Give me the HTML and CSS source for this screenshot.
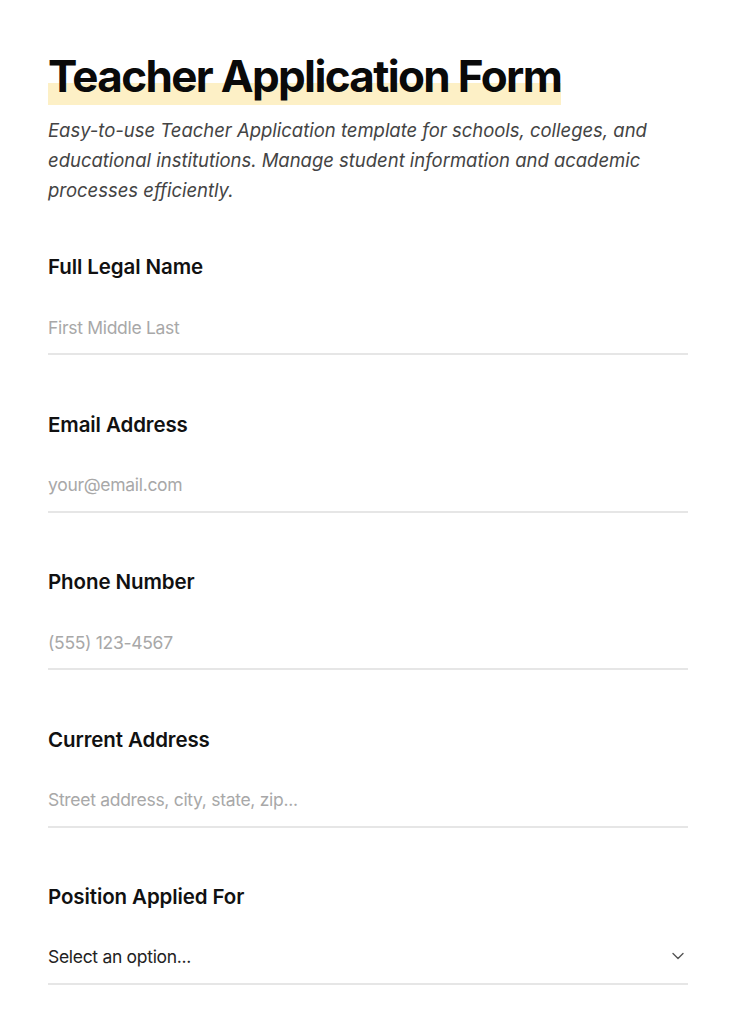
FILE: index.html
```html
<!DOCTYPE html>
<html lang="en">
<head>
<meta charset="utf-8">
<title>Teacher Application Form</title>
<link rel="stylesheet" href="styles.css">
</head>
<body>
<main class="page">
  <header class="intro">
    <h1 class="title"><span class="title-mark">Teacher Application Form</span></h1>
    <p class="lead">Easy-to-use Teacher Application template for schools, colleges, and educational institutions. Manage student information and academic processes efficiently.</p>
  </header>
  <form class="form">
    <div class="field">
      <label class="label" for="name">Full Legal Name</label>
      <input class="input" id="name" type="text" placeholder="First Middle Last">
    </div>
    <div class="field">
      <label class="label" for="email">Email Address</label>
      <input class="input" id="email" type="email" placeholder="your@email.com">
    </div>
    <div class="field">
      <label class="label" for="phone">Phone Number</label>
      <input class="input" id="phone" type="tel" placeholder="(555) 123-4567">
    </div>
    <div class="field">
      <label class="label" for="addr">Current Address</label>
      <input class="input" id="addr" type="text" placeholder="Street address, city, state, zip...">
    </div>
    <div class="field">
      <label class="label" for="pos">Position Applied For</label>
      <div class="select-wrap">
        <select class="select" id="pos">
          <option>Select an option...</option>
        </select>
        <svg class="chevron" width="14" height="14" viewBox="0 0 14 14" aria-hidden="true"><path d="M2 4.5 L7 9.5 L12 4.5" fill="none" stroke="#555" stroke-width="1.4" stroke-linecap="round" stroke-linejoin="round"/></svg>
      </div>
    </div>
  </form>
</main>
</body>
</html>
```
FILE: styles.css
```css
* { box-sizing: border-box; }
html, body { margin: 0; padding: 0; background: #fff; }
body { font-family: Inter, "Noto Sans", sans-serif; color: #111; }
.page { padding: 50px 48px 0; }
.intro { margin-bottom: 48px; }
.title {
  margin: 0;
  font-size: 44px;
  font-weight: 700;
  letter-spacing: -1.65px;
  line-height: 52px;
  color: #0a0a0a;
}
.title-mark {
  background: linear-gradient(to bottom, transparent 0, transparent 34px, #fdf0c6 34px, #fdf0c6 100%);
  padding-bottom: 2px;
}
.lead {
  margin: 13px 0 0;
  font-style: italic;
  font-size: 18.5px;
  line-height: 30px;
  color: #444;
  letter-spacing: -0.02px;
}
.form { display: flex; flex-direction: column; gap: 55.5px; }
.field { display: flex; flex-direction: column; }
.label {
  font-size: 20.5px;
  font-weight: 600;
  letter-spacing: -0.1px;
  line-height: 28px;
  color: #111;
  margin-bottom: 33px;
}
.input, .select {
  font-family: inherit;
  font-size: 17.5px;
  letter-spacing: -0.3px;
  border: none;
  border-bottom: 2px solid #e6e6e6;
  padding: 0 0 13px;
  height: 41px;
  background: transparent;
  outline: none;
  width: 100%;
  color: #222;
}
.input::placeholder { color: #a8a8a8; }
.select-wrap { position: relative; }
.select { appearance: none; -webkit-appearance: none; border-radius: 0; padding-bottom: 15px; }
.chevron { position: absolute; right: 3px; top: 5px; pointer-events: none; }
```
